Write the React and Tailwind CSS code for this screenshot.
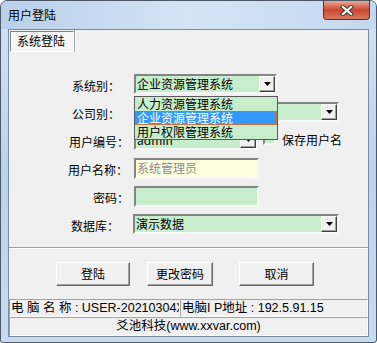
import React from 'react';

const sunken = 'border-2 border-t-[#838383] border-l-[#838383] border-b-[#f7f7f7] border-r-[#f7f7f7]';

function DropBtn() {
  return (
    <div className="w-[16px] h-[16px] shrink-0 bg-[#f0f0f0] border border-t-white border-l-white border-b-[#404040] border-r-[#404040] shadow-[inset_-1px_-1px_0_#a0a0a0] flex items-center justify-center">
      <svg width="7" height="4" viewBox="0 0 7 4">
        <path d="M0 0h7L3.5 4z" fill="#000" />
      </svg>
    </div>
  );
}

function Combo({ w, children, overlay }) {
  return (
    <div className={`relative ${w} h-[20px] ${sunken} bg-[#c7edcc] flex items-center`}>
      <div className="flex-1 pl-[1px] text-[12px] leading-[16px] whitespace-nowrap overflow-hidden">{children}</div>
      <DropBtn />
      {overlay}
    </div>
  );
}

function Label({ pl, w = 'w-[125px]', children }) {
  return (
    <div className={`${w} shrink-0 ${pl} pt-[2px] text-[12px] leading-[20px]`}>{children}</div>
  );
}

function WinButton({ w, ml, children }) {
  return (
    <button className={`${w} ${ml} h-[24px] bg-[#f0f0f0] border border-t-white border-l-white border-b-[#696969] border-r-[#696969] shadow-[inset_-1px_-1px_0_#a0a0a0] text-[12px] leading-[20px] text-black`}>
      {children}
    </button>
  );
}

export default function App() {
  const list = (
    <div className="absolute left-[-2px] top-[20px] w-[144px] h-[44px] border border-[#5a5a5a] bg-[#c7edcc] text-[12px] leading-[14px] z-10">
      <div className="h-[14px] pl-[2px]">人力资源管理系统</div>
      <div className="h-[14px] pl-[1px] bg-[#3399ff] text-white border border-dotted border-[#c8743c] leading-[12px]">企业资源管理系统</div>
      <div className="h-[14px] pl-[2px]">用户权限管理系统</div>
    </div>
  );

  return (
    <div className="w-[377px] h-[343px] rounded-t-[7px] rounded-b-[3px] border border-[#4a5868] bg-linear-to-b from-[#d3e3f4] via-[#bcd3ec] to-[#c7dbf0] font-['Noto_Sans_CJK_SC',sans-serif] text-black overflow-hidden">
      <div className="h-[28px] flex justify-between bg-linear-to-r from-[#b8d0ea] via-[#d4e4f5] to-[#c3d8ef]">
        <div className="pl-[7px] pt-[6px] text-[12px] leading-[16px]">用户登陆</div>
        <div className="mr-[6px] w-[47px] h-[19px] rounded-b-[4px] border border-t-0 border-[#6b2b1e] bg-linear-to-b from-[#e9a999] via-[#c8462d] to-[#d87a62] flex items-center justify-center">
          <svg width="14" height="11" viewBox="0 0 14 11">
            <path d="M3 2L11 9M11 2L3 9" stroke="#3c3c3c" strokeWidth="4.2" strokeLinecap="square" />
            <path d="M3 2L11 9M11 2L3 9" stroke="#fff" strokeWidth="2.2" strokeLinecap="square" />
          </svg>
        </div>
      </div>

      <div className="ml-[7px] w-[361px] h-[308px] border border-[#7b8a9c] bg-[#f0f0f0]">
        <div className="h-[22px] flex">
          <div className="ml-[1px] mt-[1px] w-[64px] h-[21px] border border-t-[#808080] border-l-[#808080] border-b-white border-r-white bg-[#f6f6f6] text-[12px] leading-[18px] pl-[6px]">
            系统登陆
          </div>
          <div className="w-[1px] h-[22px] bg-[#a0a0a0]" />
          <div className="w-[1px] h-[22px] bg-white" />
        </div>

        <div className="h-[196px] border-b border-[#a0a0a0] pt-[22px] flex flex-col gap-[8px]">
          <div className="flex h-[20px]">
            <Label pl="pl-[63px]">系统别：</Label>
            <Combo w="w-[143px]" overlay={list}>企业资源管理系统</Combo>
          </div>
          <div className="flex h-[20px]">
            <Label pl="pl-[63px]">公司别：</Label>
            <Combo w="w-[205px]" />
          </div>
          <div className="flex h-[20px] items-start">
            <Label pl="pl-[60px]">用户编号：</Label>
            <Combo w="w-[124px]">admin</Combo>
            <div className={`ml-[5px] mt-[2px] w-[13px] h-[13px] ${sunken} bg-[#c7edcc]`} />
            <div className="ml-[6px] pt-[2px] text-[12px] leading-[16px]">保存用户名</div>
          </div>
          <div className="flex h-[20px]">
            <Label pl="pl-[59px]">用户名称：</Label>
            <div className={`w-[125px] h-[21px] ${sunken} bg-[#ffffe1] pl-[1px] text-[12px] leading-[16px] text-[#8c8c8c]`}>
              系统管理员
            </div>
          </div>
          <div className="flex h-[20px]">
            <Label pl="pl-[84px]">密码：</Label>
            <div className={`w-[125px] h-[21px] ${sunken} bg-[#c7edcc]`} />
          </div>
          <div className="flex h-[20px]">
            <Label pl="pl-[62px]" w="w-[124px]">数据库：</Label>
            <Combo w="w-[206px]">演示数据</Combo>
          </div>
        </div>

        <div className="h-[51px] pt-[13px] border-t border-white flex items-start">
          <WinButton w="w-[74px]" ml="ml-[47px]">登陆</WinButton>
          <WinButton w="w-[66px]" ml="ml-[17px]">更改密码</WinButton>
          <WinButton w="w-[75px]" ml="ml-[26px]">取消</WinButton>
        </div>

        <div className="h-[37px] flex flex-col font-['Liberation_Sans','Noto_Sans_CJK_SC',sans-serif] text-[12.5px]">
          <div className="h-[18px] flex">
            <div className="w-[171px] h-[18px] border border-t-[#a0a0a0] border-l-[#a0a0a0] border-b-white border-r-white overflow-hidden whitespace-nowrap leading-[16px] pl-[1px]">
              电 脑 名 称 : USER-20210304X
            </div>
            <div className="flex-1 h-[18px] border border-t-[#a0a0a0] border-l-[#a0a0a0] border-b-white border-r-white overflow-hidden whitespace-nowrap leading-[16px] pl-[1px]">
              电脑I P地址 : 192.5.91.15
            </div>
          </div>
          <div className="h-[19px] border border-t-[#a0a0a0] border-l-[#a0a0a0] border-b-white border-r-white text-center leading-[17px]">
            爻池科技(www.xxvar.com)
          </div>
        </div>
      </div>
    </div>
  );
}
